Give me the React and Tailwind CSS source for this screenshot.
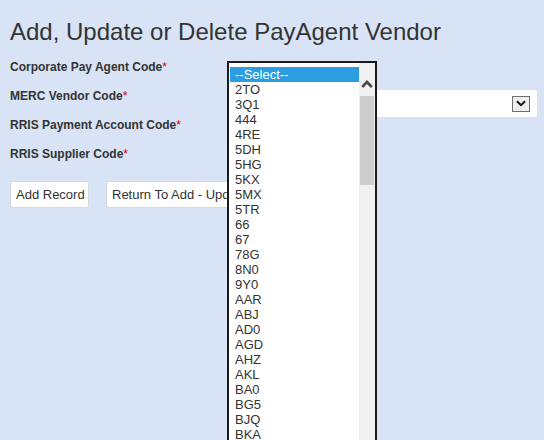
import { useState } from 'react';

const codes = [
  '2TO', '3Q1', '444', '4RE', '5DH', '5HG', '5KX', '5MX', '5TR', '66', '67', '78G',
  '8N0', '9Y0', 'AAR', 'ABJ', 'AD0', 'AGD', 'AHZ', 'AKL', 'BA0', 'BG5', 'BJQ', 'BKA',
];

function Required() {
  return <span className="text-[#d40000] font-normal">*</span>;
}

function Label({ children }) {
  return (
    <div className="w-[218px] shrink-0 text-[12px] leading-[14px] font-bold text-[#333]">
      {children}
      <Required />
    </div>
  );
}

/* closed select with the old-style arrow box */
function SelectBox() {
  return (
    <div className="mt-[1px] flex-1 h-[27px] bg-white rounded-[2px] flex items-center justify-end pr-[7px]">
      <span className="w-[18px] h-[16px] border border-[#6f6f6f] bg-[#ececec] flex items-center justify-center">
        <svg width="10" height="7" viewBox="0 0 10 7" fill="none">
          <path d="M1 1.2 5 5.2 9 1.2" stroke="#111" strokeWidth="2" />
        </svg>
      </span>
    </div>
  );
}

/* open option list of "Corporate Pay Agent Code" */
function OpenList() {
  const [selected] = useState('--Select--');
  return (
    <div className="absolute left-[227px] top-[61px] w-[150px] h-[400px] border-2 border-[#1b1b1b] bg-white flex">
      <ul className="flex-1 pt-[4px] pl-[1px] text-[13px] leading-[15px] text-[#333]">
        {['--Select--', ...codes].map(c => (
          <li
            key={c}
            className={`h-[15px] pl-[5px] whitespace-nowrap ${
              c === selected ? 'bg-[#2b9de0] text-white' : ''
            }`}
          >
            {c}
          </li>
        ))}
      </ul>
      {/* scrollbar */}
      <div className="w-[16px] bg-[#f0f0f0] flex flex-col items-center">
        <svg className="mt-[17px]" width="12" height="8" viewBox="0 0 12 8" fill="none">
          <path d="M1.2 7 6 2 10.8 7" stroke="#4a4a4a" strokeWidth="2.6" />
        </svg>
        <div className="mt-[8px] w-[14px] h-[89px] bg-[#cdcdcd]" />
      </div>
    </div>
  );
}

export default function App() {
  return (
    <div className="relative w-[544px] h-[440px] overflow-hidden bg-[#d8e3f5] font-['Liberation_Sans',Arial,sans-serif]">
      <h1 className="pt-[18px] pl-[10px] text-[24px] leading-[27px] text-[#333]">
        Add, Update or Delete PayAgent Vendor
      </h1>

      <div className="mt-[15px] pl-[10px] pr-[7px]">
        <div className="h-[29px] flex">
          <Label>Corporate Pay Agent Code</Label>
        </div>
        <div className="h-[29px] flex">
          <Label>MERC Vendor Code</Label>
          <SelectBox />
        </div>
        <div className="h-[29px] flex">
          <Label>RRIS Payment Account Code</Label>
        </div>
        <div className="h-[29px] flex">
          <Label>RRIS Supplier Code</Label>
        </div>

        <div className="mt-[5px] flex gap-[17px] text-[13px] leading-[15px] text-[#333]">
          <button className="w-[79px] py-[5px] px-[5px] text-left bg-white border border-[#d3d9e3] rounded-[3px] whitespace-nowrap">
            Add Record
          </button>
          <button className="py-[5px] px-[5px] text-left bg-white border border-[#d3d9e3] rounded-[3px] whitespace-nowrap">
            Return To Add - Update Search
          </button>
        </div>
      </div>

      <OpenList />
    </div>
  );
}
